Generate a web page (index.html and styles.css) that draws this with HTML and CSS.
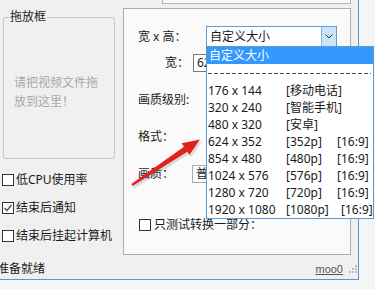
FILE: index.html
```html
<!DOCTYPE html>
<html lang="zh">
<head>
<meta charset="utf-8">
<title>Moo0 Video Converter</title>
<link rel="stylesheet" href="styles.css">
</head>
<body>
<div class="window">
  <div class="top-box"></div>
  <div class="main">
    <div class="left">
      <div class="group">
        <div class="group-title">拖放框</div>
        <p class="drop-hint">请把视频文件拖放到这里！</p>
      </div>
      <div class="checks">
        <div class="check"><span class="box"></span>低CPU使用率</div>
        <div class="check"><span class="box"><svg width="10" height="10" viewBox="0 0 10 10"><polyline points="1.5,5 4,7.5 8.5,2" fill="none" stroke="#444" stroke-width="1.2"/></svg></span>结束后通知</div>
        <div class="check"><span class="box"></span>结束后挂起计算机</div>
      </div>
    </div>
    <div class="panel">
      <div class="row row-size">
        <span class="lbl-size">宽 x 高：</span>
        <div class="combo">
          <span class="combo-text">自定义大小</span>
          <span class="combo-btn"><svg width="8" height="5" viewBox="0 0 8 5"><polyline points="0.5,0.5 4,4 7.5,0.5" fill="none" stroke="#333" stroke-width="1"/></svg></span>
          <ul class="dropdown">
            <li class="dd-sel">自定义大小</li>
            <li class="dd-sep"></li>
            <li class="dd-row"><span class="c1">176 x 144</span><span class="c2">[移动电话]</span></li>
            <li class="dd-row"><span class="c1">320 x 240</span><span class="c2">[智能手机]</span></li>
            <li class="dd-row"><span class="c1">480 x 320</span><span class="c2">[安卓]</span></li>
            <li class="dd-row"><span class="c1">624 x 352</span><span class="c2">[352p]</span><span class="c3">[16:9]</span></li>
            <li class="dd-row"><span class="c1">854 x 480</span><span class="c2">[480p]</span><span class="c3">[16:9]</span></li>
            <li class="dd-row"><span class="c1">1024 x 576</span><span class="c2">[576p]</span><span class="c3">[16:9]</span></li>
            <li class="dd-row"><span class="c1">1280 x 720</span><span class="c2">[720p]</span><span class="c3">[16:9]</span></li>
            <li class="dd-row"><span class="c1">1920 x 1080</span><span class="c2">[1080p]</span><span class="c3 c3-wide">[16:9]</span></li>
          </ul>
        </div>
      </div>
      <div class="row row-w">
        <span class="lbl-w">宽：</span>
        <span class="field">624</span>
      </div>
      <div class="row row-gap">画质级别:</div>
      <div class="row row-gap">格式：</div>
      <div class="row row-gap">
        <span class="lbl-q">画质：</span>
        <span class="field field-combo">普通</span>
      </div>
      <div class="row row-part">
        <span class="box box-part"></span>只测试转换一部分：
      </div>
    </div>
  </div>
  <div class="status">
    <span class="status-text">准备就绪</span>
    <span class="moo">moo0</span>
    <svg class="grip" width="9" height="9" viewBox="0 0 9 9">
      <rect x="7" y="1" width="2" height="2" fill="#bdbdbd"/>
      <rect x="4" y="4" width="2" height="2" fill="#bdbdbd"/>
      <rect x="7" y="4" width="2" height="2" fill="#bdbdbd"/>
      <rect x="1" y="7" width="2" height="2" fill="#bdbdbd"/>
      <rect x="4" y="7" width="2" height="2" fill="#bdbdbd"/>
      <rect x="7" y="7" width="2" height="2" fill="#bdbdbd"/>
    </svg>
  </div>
  <svg class="arrow" width="375" height="289" viewBox="0 0 375 289">
    <g fill="#666" opacity="0.22" transform="translate(1.5,2.5)">
      <polygon points="131.4,184 184.4,146.6 187.6,151.4 132.6,186"/>
      <polygon points="200,139.5 181.6,143.2 189.4,154.8"/>
    </g>
    <g fill="#e3211c">
      <polygon points="131.4,184 184.4,146.6 187.6,151.4 132.6,186"/>
      <polygon points="200,139.5 181.6,143.2 189.4,154.8"/>
    </g>
  </svg>
</div>
</body>
</html>
```
FILE: styles.css
```css
html, body {
  margin: 0;
  padding: 0;
}

body {
  width: 375px;
  height: 289px;
  overflow: hidden;
  background: #f5f5f5;
  font-family: "Noto Sans", "Noto Sans CJK SC", sans-serif;
  font-size: 12px;
  line-height: 16px;
  color: #1a1a1a;
}

.window {
  position: relative;
  width: 358px;
  height: 279px;
  background: #f0f0f0;
  border-right: 1px solid #5795d6;
  border-bottom: 1px solid #5795d6;
  display: flex;
  flex-direction: column;
}

.top-box {
  flex: none;
  margin-left: 162px;
  width: 189px;
  height: 4px;
  box-sizing: border-box;
  border: 1px solid #b4b4b4;
  border-top: 0;
  background: #fafafa;
}

.main {
  flex: 1;
  min-height: 0;
  display: flex;
  align-items: flex-start;
}

.left {
  flex: none;
  width: 123px;
}

.group {
  margin: 13px 0 0 3px;
  width: 112px;
  height: 142px;
  box-sizing: border-box;
  border: 1px solid #c6c6c6;
  border-radius: 3px;
}

.group-title {
  width: fit-content;
  margin: -9px 0 0 5px;
  padding: 0 1px;
  background: #f0f0f0;
  line-height: 16px;
}

.drop-hint {
  margin: 48px 0 0 10px;
  width: 86px;
  line-height: 19px;
  color: #a8a8a8;
}

.checks {
  display: flex;
  flex-direction: column;
  gap: 12px;
  margin-top: 13px;
}

.check {
  display: flex;
  align-items: center;
  gap: 2px;
  height: 16px;
  margin-left: 2px;
  white-space: nowrap;
}

.box {
  flex: none;
  width: 12px;
  height: 12px;
  box-sizing: border-box;
  border: 1px solid #333;
  background: #fff;
  display: flex;
  align-items: center;
  justify-content: center;
}

.panel {
  flex: none;
  margin-top: 4px;
  width: 228px;
  height: 247px;
  box-sizing: border-box;
  border: 1px solid #adadad;
  background: #fafafa;
  padding: 17px 0 0 14px;
}

.row {
  display: flex;
  align-items: center;
  height: 18px;
  white-space: nowrap;
}

.row-size {
  height: 21px;
}

.lbl-size {
  width: 68px;
}

.combo {
  position: relative;
  width: 131px;
  height: 21px;
  box-sizing: border-box;
  border: 1px solid #5a9fd8;
  background: #fff;
  display: flex;
}

.combo-text {
  flex: 1;
  padding-left: 3px;
  line-height: 19px;
}

.combo-btn {
  width: 14px;
  border-left: 1px solid #7eb4ea;
  background: #cce4f7;
  display: flex;
  align-items: center;
  justify-content: center;
}

.dropdown {
  position: absolute;
  left: -1px;
  top: 19px;
  z-index: 2;
  width: 168px;
  box-sizing: border-box;
  margin: 0;
  padding: 0;
  list-style: none;
  border: 1px solid #5b9bd5;
  background: #fff;
}

.dd-sel {
  height: 17px;
  line-height: 17px;
  padding-left: 2px;
  background: #3399ff;
  color: #fff;
}

.dd-sep {
  height: 18px;
  margin: 0 2px 0 1px;
  background: repeating-linear-gradient(to right, #555 0 4px, transparent 4px 6px) 0 9px / 100% 1px no-repeat;
}

.dd-row {
  display: flex;
  height: 17px;
  line-height: 17px;
  padding-left: 1px;
  white-space: nowrap;
  color: #1a1a1a;
}

.c1 {
  flex: none;
  width: 78px;
}

.c2 {
  flex: none;
  width: 51px;
}

.c3-wide {
  padding-left: 4px;
}

.row-w {
  margin-top: 7px;
}

.lbl-w {
  margin-left: 27px;
  width: 28px;
}

.field {
  width: 60px;
  height: 18px;
  box-sizing: border-box;
  border: 1px solid #7a7a7a;
  background: #fff;
  padding-left: 3px;
  line-height: 16px;
}

.field-combo {
  border-color: #acacac;
  background: #fdfdfd;
}

.row-gap {
  margin-top: 19px;
}

.lbl-q {
  width: 54px;
}

.row-part {
  margin-top: 33px;
  gap: 3px;
}

.box-part {
  margin-left: 1px;
}

.status {
  flex: none;
  height: 21px;
  display: flex;
  align-items: center;
}

.status-text {
  flex: 1;
  margin-left: -3px;
}

.moo {
  font-family: "Liberation Sans", sans-serif;
  font-size: 11px;
  color: #555;
  text-decoration: underline;
  margin-right: 5px;
}

.grip {
  flex: none;
  margin-right: 1px;
}

.arrow {
  position: absolute;
  left: 0;
  top: 0;
  z-index: 3;
  pointer-events: none;
}
```
